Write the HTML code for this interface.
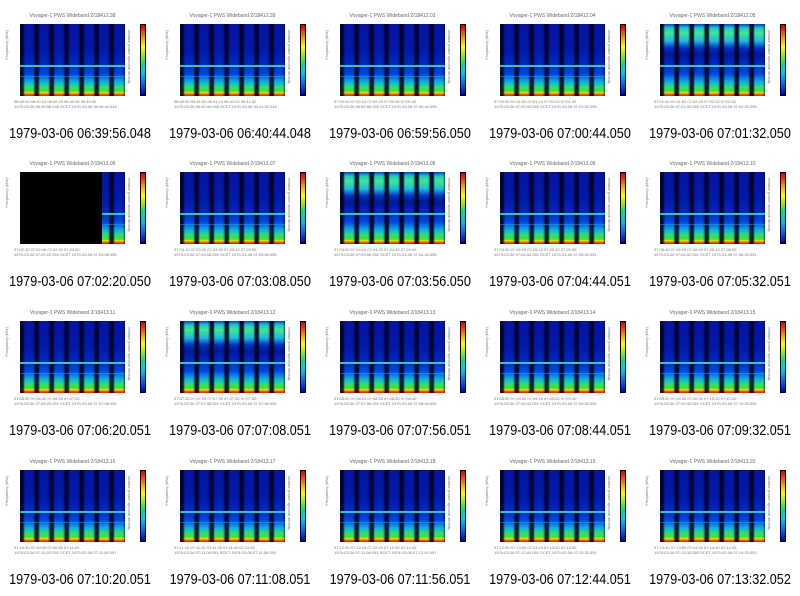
<!DOCTYPE html>
<html><head><meta charset="utf-8"><style>
body{margin:0;width:800px;height:596px;background:#fff;position:relative;overflow:hidden;font-family:"Liberation Sans",sans-serif}
.c{position:absolute;width:160px;height:148px}
.t{position:absolute;left:20px;width:105px;top:13px;text-align:center;font-size:5px;color:#666;white-space:nowrap}
.p{position:absolute;left:20px;top:24px;width:105px;height:72px;
background:
linear-gradient(to bottom,transparent 41px,#3cc0c0 41px,#3cc0c0 43px,transparent 43px),
linear-gradient(to bottom,transparent 52px,rgba(60,150,230,.5) 52px,rgba(60,150,230,.5) 53px,transparent 53px),
repeating-linear-gradient(to right,rgba(0,0,30,.85) 0,rgba(0,0,30,.85) 3px,transparent 5px,transparent 13px,rgba(0,0,30,.6) 15px),
linear-gradient(to top,#e02000 0,#ff6000 2px,#f0e000 3px,#40e040 5px,#30e070 9px,#10b0e0 14px,#0048e0 22px,#0028c0 32px,#001aa8 45px,#0814a0 100%);}
.b{background:
linear-gradient(to bottom,transparent 41px,#3cc0c0 41px,#3cc0c0 43px,transparent 43px),
repeating-linear-gradient(to right,rgba(0,0,30,.9) 0,rgba(0,0,30,.9) 3px,transparent 5px,transparent 13px,rgba(0,0,30,.6) 15px),
linear-gradient(to bottom,#0040d0 0,#20c8c0 4px,#40e890 9px,#20b8e0 17px,#0030c0 24px,#001898 30px,#0020b0 36px,transparent 36px),
linear-gradient(to top,#e02000 0,#ff6000 2px,#f0e000 3px,#40e040 5px,#30e070 9px,#10b0e0 14px,#0048e0 22px,#0028c0 32px,#001aa8 45px,#0814a0 100%);}
.k{position:absolute;left:0;top:0;width:82px;height:72px;background:#000}
.cb{position:absolute;left:140px;top:24px;width:6px;height:72px;border:1px solid #000;box-sizing:border-box;
background:linear-gradient(to top,#0000c0,#0060ff 15%,#00c0ff 30%,#00e080 45%,#a0f000 58%,#ffff00 68%,#ffa000 80%,#ff3000 92%,#d00000)}
.x{position:absolute;left:14px;top:99px;width:120px;font-size:4px;color:#777;white-space:nowrap;line-height:5px}
.y{position:absolute;left:4px;top:30px;font-size:4px;color:#777;writing-mode:vertical-rl;transform:rotate(180deg)}
.r{position:absolute;left:127px;top:30px;font-size:4px;color:#777;writing-mode:vertical-rl}
.cap{position:absolute;left:-20px;width:200px;top:126px;text-align:center;font-size:14.5px;color:#000;white-space:nowrap;transform:scaleX(0.87);transform-origin:100px 0}
</style></head><body>
<div class="c" style="left:0;top:0"><div class="t">Voyager-1 PWS Wideband 2/18412.38</div><div class="p"></div><div class="cb"></div><div class="y">Frequency (kHz)</div><div class="r">relative power spectral density</div><div class="x">06:40:00 06:40:10 06:40:20 06:40:30 06:40:40<br>1979-03-06 06:39:56.048 SCET 1979-03-06 06:40:44.048</div><div class="cap">1979-03-06 06:39:56.048</div></div>
<div class="c" style="left:160px;top:0"><div class="t">Voyager-1 PWS Wideband 2/18412.39</div><div class="p"></div><div class="cb"></div><div class="y">Frequency (kHz)</div><div class="r">relative power spectral density</div><div class="x">06:40:50 06:41:00 06:41:10 06:41:20 06:41:30<br>1979-03-06 06:40:44.048 SCET 1979-03-06 06:41:32.048</div><div class="cap">1979-03-06 06:40:44.048</div></div>
<div class="c" style="left:320px;top:0"><div class="t">Voyager-1 PWS Wideband 2/18413.03</div><div class="p"></div><div class="cb"></div><div class="y">Frequency (kHz)</div><div class="r">relative power spectral density</div><div class="x">07:00:00 07:00:10 07:00:20 07:00:30 07:00:40<br>1979-03-06 06:59:56.050 SCET 1979-03-06 07:00:44.050</div><div class="cap">1979-03-06 06:59:56.050</div></div>
<div class="c" style="left:480px;top:0"><div class="t">Voyager-1 PWS Wideband 2/18413.04</div><div class="p"></div><div class="cb"></div><div class="y">Frequency (kHz)</div><div class="r">relative power spectral density</div><div class="x">07:00:50 07:01:00 07:01:10 07:01:20 07:01:30<br>1979-03-06 07:00:44.050 SCET 1979-03-06 07:01:32.050</div><div class="cap">1979-03-06 07:00:44.050</div></div>
<div class="c" style="left:640px;top:0"><div class="t">Voyager-1 PWS Wideband 2/18413.05</div><div class="p b"></div><div class="cb"></div><div class="y">Frequency (kHz)</div><div class="r">relative power spectral density</div><div class="x">07:01:40 07:01:50 07:02:00 07:02:10 07:02:20<br>1979-03-06 07:01:32.050 SCET 1979-03-06 07:02:20.050</div><div class="cap">1979-03-06 07:01:32.050</div></div>

<div class="c" style="left:0;top:148px"><div class="t">Voyager-1 PWS Wideband 2/18413.06</div><div class="p"><div class="k"></div></div><div class="cb"></div><div class="y">Frequency (kHz)</div><div class="r">relative power spectral density</div><div class="x">07:02:30 07:02:40 07:02:50 07:03:00<br>1979-03-06 07:02:20.050 SCET 1979-03-06 07:03:08.050</div><div class="cap">1979-03-06 07:02:20.050</div></div>
<div class="c" style="left:160px;top:148px"><div class="t">Voyager-1 PWS Wideband 2/18413.07</div><div class="p"></div><div class="cb"></div><div class="y">Frequency (kHz)</div><div class="r">relative power spectral density</div><div class="x">07:03:10 07:03:20 07:03:30 07:03:40 07:03:50<br>1979-03-06 07:03:08.050 SCET 1979-03-06 07:03:56.050</div><div class="cap">1979-03-06 07:03:08.050</div></div>
<div class="c" style="left:320px;top:148px"><div class="t">Voyager-1 PWS Wideband 2/18413.08</div><div class="p b"></div><div class="cb"></div><div class="y">Frequency (kHz)</div><div class="r">relative power spectral density</div><div class="x">07:04:00 07:04:10 07:04:20 07:04:30 07:04:40<br>1979-03-06 07:03:56.050 SCET 1979-03-06 07:04:44.050</div><div class="cap">1979-03-06 07:03:56.050</div></div>
<div class="c" style="left:480px;top:148px"><div class="t">Voyager-1 PWS Wideband 2/18413.09</div><div class="p"></div><div class="cb"></div><div class="y">Frequency (kHz)</div><div class="r">relative power spectral density</div><div class="x">07:04:50 07:05:00 07:05:10 07:05:20 07:05:30<br>1979-03-06 07:04:44.051 SCET 1979-03-06 07:05:32.051</div><div class="cap">1979-03-06 07:04:44.051</div></div>
<div class="c" style="left:640px;top:148px"><div class="t">Voyager-1 PWS Wideband 2/18413.10</div><div class="p"></div><div class="cb"></div><div class="y">Frequency (kHz)</div><div class="r">relative power spectral density</div><div class="x">07:05:40 07:05:50 07:06:00 07:06:10 07:06:20<br>1979-03-06 07:05:32.051 SCET 1979-03-06 07:06:20.051</div><div class="cap">1979-03-06 07:05:32.051</div></div>

<div class="c" style="left:0;top:297px"><div class="t">Voyager-1 PWS Wideband 2/18413.11</div><div class="p"></div><div class="cb"></div><div class="y">Frequency (kHz)</div><div class="r">relative power spectral density</div><div class="x">07:06:30 07:06:40 07:06:50 07:07:00<br>1979-03-06 07:06:20.051 SCET 1979-03-06 07:07:08.051</div><div class="cap">1979-03-06 07:06:20.051</div></div>
<div class="c" style="left:160px;top:297px"><div class="t">Voyager-1 PWS Wideband 2/18413.12</div><div class="p b"></div><div class="cb"></div><div class="y">Frequency (kHz)</div><div class="r">relative power spectral density</div><div class="x">07:07:10 07:07:20 07:07:30 07:07:40 07:07:50<br>1979-03-06 07:07:08.051 SCET 1979-03-06 07:07:56.051</div><div class="cap">1979-03-06 07:07:08.051</div></div>
<div class="c" style="left:320px;top:297px"><div class="t">Voyager-1 PWS Wideband 2/18413.13</div><div class="p"></div><div class="cb"></div><div class="y">Frequency (kHz)</div><div class="r">relative power spectral density</div><div class="x">07:08:00 07:08:10 07:08:20 07:08:30 07:08:40<br>1979-03-06 07:07:56.051 SCET 1979-03-06 07:08:44.051</div><div class="cap">1979-03-06 07:07:56.051</div></div>
<div class="c" style="left:480px;top:297px"><div class="t">Voyager-1 PWS Wideband 2/18413.14</div><div class="p"></div><div class="cb"></div><div class="y">Frequency (kHz)</div><div class="r">relative power spectral density</div><div class="x">07:08:50 07:09:00 07:09:10 07:09:20 07:09:30<br>1979-03-06 07:08:44.051 SCET 1979-03-06 07:09:32.051</div><div class="cap">1979-03-06 07:08:44.051</div></div>
<div class="c" style="left:640px;top:297px"><div class="t">Voyager-1 PWS Wideband 2/18413.15</div><div class="p"></div><div class="cb"></div><div class="y">Frequency (kHz)</div><div class="r">relative power spectral density</div><div class="x">07:09:40 07:09:50 07:10:00 07:10:10 07:10:20<br>1979-03-06 07:09:32.051 SCET 1979-03-06 07:10:20.051</div><div class="cap">1979-03-06 07:09:32.051</div></div>

<div class="c" style="left:0;top:446px"><div class="t">Voyager-1 PWS Wideband 2/18413.16</div><div class="p"></div><div class="cb"></div><div class="y">Frequency (kHz)</div><div class="r">relative power spectral density</div><div class="x">07:10:30 07:10:40 07:10:50 07:11:00<br>1979-03-06 07:10:20.051 SCET 1979-03-06 07:11:08.051</div><div class="cap">1979-03-06 07:10:20.051</div></div>
<div class="c" style="left:160px;top:446px"><div class="t">Voyager-1 PWS Wideband 2/18413.17</div><div class="p"></div><div class="cb"></div><div class="y">Frequency (kHz)</div><div class="r">relative power spectral density</div><div class="x">07:11:10 07:11:20 07:11:30 07:11:40 07:11:50<br>1979-03-06 07:11:08.051 SCET 1979-03-06 07:11:56.051</div><div class="cap">1979-03-06 07:11:08.051</div></div>
<div class="c" style="left:320px;top:446px"><div class="t">Voyager-1 PWS Wideband 2/18413.18</div><div class="p"></div><div class="cb"></div><div class="y">Frequency (kHz)</div><div class="r">relative power spectral density</div><div class="x">07:12:00 07:12:10 07:12:20 07:12:30 07:12:40<br>1979-03-06 07:11:56.051 SCET 1979-03-06 07:12:44.051</div><div class="cap">1979-03-06 07:11:56.051</div></div>
<div class="c" style="left:480px;top:446px"><div class="t">Voyager-1 PWS Wideband 2/18413.19</div><div class="p"></div><div class="cb"></div><div class="y">Frequency (kHz)</div><div class="r">relative power spectral density</div><div class="x">07:12:50 07:13:00 07:13:10 07:13:20 07:13:30<br>1979-03-06 07:12:44.051 SCET 1979-03-06 07:13:32.051</div><div class="cap">1979-03-06 07:12:44.051</div></div>
<div class="c" style="left:640px;top:446px"><div class="t">Voyager-1 PWS Wideband 2/18413.20</div><div class="p"></div><div class="cb"></div><div class="y">Frequency (kHz)</div><div class="r">relative power spectral density</div><div class="x">07:13:40 07:13:50 07:14:00 07:14:10 07:14:20<br>1979-03-06 07:13:32.052 SCET 1979-03-06 07:14:20.052</div><div class="cap">1979-03-06 07:13:32.052</div></div>
</body></html>
